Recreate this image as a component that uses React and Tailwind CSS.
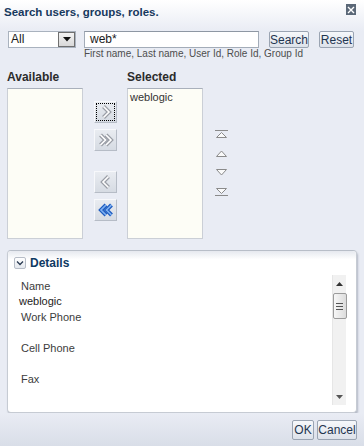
const font = { fontFamily: '"Liberation Sans", Arial, sans-serif' };

const Chevrons = ({ dir = "right", double = false, blue = false }) => {
  const outer = blue ? "#1f5cc0" : "#9a9ea6";
  const inner = blue ? "#7fb2f2" : "#ffffff";
  const r = dir === "right";
  const lines = double
    ? r
      ? ["2.5,3 7.5,8 2.5,13", "8,3 13,8 8,13"]
      : ["8,3 3,8 8,13", "13.5,3 8.5,8 13.5,13"]
    : r
    ? ["5.5,2.5 11,8 5.5,13.5"]
    : ["10.5,2.5 5,8 10.5,13.5"];
  return (
    <svg width="16" height="16" viewBox="0 0 16 16" className="block">
      {lines.map((p) => (
        <polyline key={p + "o"} points={p} fill="none" stroke={outer} strokeWidth="4" strokeLinejoin="miter" />
      ))}
      {lines.map((p) => (
        <polyline key={p + "i"} points={p} fill="none" stroke={inner} strokeWidth="1.6" strokeLinejoin="miter" />
      ))}
    </svg>
  );
};

const ShuttleBtn = ({ children, focus }) => (
  <div className="w-[23px] h-[22px] flex items-center justify-center bg-gradient-to-b from-[#e9ecf1] to-[#d6dbe3] border border-t-[#f7f8fb] border-l-[#f7f8fb] border-r-[#b6bcc6] border-b-[#b6bcc6]">
    <div className={focus ? "w-[19px] h-[18px] flex items-center justify-center border border-dotted border-black" : "flex items-center justify-center"}>
      {children}
    </div>
  </div>
);

const Reorder = ({ kind }) => {
  const up = kind === "top" || kind === "up";
  return (
    <svg width="13" height="9" viewBox="0 0 13 9" className="block">
      {kind === "top" && <line x1="0" y1="0.5" x2="13" y2="0.5" stroke="#8a8a8a" />}
      {kind === "bottom" && <line x1="0" y1="8.5" x2="13" y2="8.5" stroke="#8a8a8a" />}
      {up ? (
        <polygon points={kind === "top" ? "1.5,7.5 6.5,2.5 11.5,7.5" : "1.5,7.5 6.5,2 11.5,7.5"} fill="#fafafa" stroke="#8a8a8a" />
      ) : (
        <polygon points={kind === "bottom" ? "1.5,1.5 6.5,6.5 11.5,1.5" : "1.5,1.5 6.5,7 11.5,1.5"} fill="#fafafa" stroke="#8a8a8a" />
      )}
    </svg>
  );
};

const Btn = ({ children, w }) => (
  <button
    type="button"
    className={`${w} h-[17px] flex items-center justify-center text-[12px] leading-none text-[#1f3550] rounded-[2px] border border-[#9aa4b2] bg-gradient-to-b from-[#f6f8fb] to-[#dde2ea]`}
  >
    {children}
  </button>
);

const detailRows = [
  ["Name", "weblogic"],
  ["Work Phone", ""],
  ["Cell Phone", ""],
  ["Fax", ""],
  ["E-mail", ""],
];

export default function App() {
  return (
    <div className="w-[364px] h-[446px] overflow-hidden flex flex-col bg-[#e9ecf4] text-[11px] text-[#333]" style={font}>
      {/* Title bar */}
      <div className="h-[31px] flex items-start justify-between pl-[4px] pr-[8px] bg-gradient-to-b from-white to-[#e9ecf4]">
        <span className="pt-[5px] text-[11.5px] leading-[14px] font-bold text-[#17395e]">
          Search users, groups, roles.
        </span>
        <div className="mt-[4px] w-[10px] h-[11px] bg-[#5b6878] flex items-center justify-center">
          <svg width="8" height="8" viewBox="0 0 8 8">
            <path d="M1 1 L7 7 M7 1 L1 7" stroke="#ffffff" strokeWidth="1.4" />
          </svg>
        </div>
      </div>

      {/* Search row */}
      <div className="h-[17px] flex items-center">
        <div className="ml-[8px] w-[68px] h-[17px] flex bg-white border border-[#a9b2be]">
          <span className="flex-1 pl-[2px] text-[12px] leading-[15px] text-[#1a1a1a]">All</span>
          <div className="w-[17px] h-[15px] border border-[#6f6f6f] bg-gradient-to-b from-[#f3f3f3] to-[#d8d8d8] flex items-center justify-center">
            <svg width="8" height="5" viewBox="0 0 8 5">
              <polygon points="0,0 8,0 4,4.5" fill="#111" />
            </svg>
          </div>
        </div>
        <div className="ml-[8px] w-[175px] h-[17px] bg-white border border-[#a3acb8] border-t-[#8e97a3] pl-[5px] text-[12px] leading-[15px] text-[#1a1a1a]">
          web*
        </div>
        <div className="ml-[10px]">
          <Btn w="w-[40px]">Search</Btn>
        </div>
        <div className="ml-[10px]">
          <Btn w="w-[35px]">Reset</Btn>
        </div>
      </div>

      {/* Hint */}
      <div className="h-[12px] pl-[84px] text-[10px] leading-[12px] text-[#4d4d4d]">
        First name, Last name, User Id, Role Id, Group Id
      </div>

      {/* Labels */}
      <div className="mt-[10px] h-[14px] flex text-[12px] leading-[14px] font-bold text-[#2b2b2b]">
        <span className="pl-[7px] w-[127px]">Available</span>
        <span>Selected</span>
      </div>

      {/* Shuttle */}
      <div className="mt-[4px] flex items-start pl-[7px]">
        <div className="w-[76px] h-[151px] bg-[#fdfdf6] border border-[#cbcfd6] border-t-[#a9b0bb]" />
        <div className="ml-[11px] pt-[13px] flex flex-col">
          <ShuttleBtn focus>
            <Chevrons />
          </ShuttleBtn>
          <div className="mt-[6px]">
            <ShuttleBtn>
              <Chevrons double />
            </ShuttleBtn>
          </div>
          <div className="mt-[20px]">
            <ShuttleBtn>
              <Chevrons dir="left" />
            </ShuttleBtn>
          </div>
          <div className="mt-[6px]">
            <ShuttleBtn>
              <Chevrons dir="left" double blue />
            </ShuttleBtn>
          </div>
        </div>
        <div className="ml-[10px] w-[76px] h-[151px] bg-[#fdfdf6] border border-[#cbcfd6] border-t-[#a9b0bb] pl-[2px] pt-[1px] text-[11px] leading-[14px] text-[#333]">
          weblogic
        </div>
        <div className="ml-[12px] pt-[42px] flex flex-col gap-[10px]">
          <Reorder kind="top" />
          <Reorder kind="up" />
          <Reorder kind="down" />
          <Reorder kind="bottom" />
        </div>
      </div>

      {/* Details panel */}
      <div className="mt-[11px] mx-[7px] h-[163px] flex flex-col bg-white rounded-[4px] border border-[#c6cbd3] border-t-[#b8bec8] shadow-[1px_2px_2px_rgba(80,90,110,0.35)]">
        <div className="h-[24px] flex items-center pl-[6px] rounded-t-[4px] bg-gradient-to-b from-[#e6e9ef] to-white to-[35%]">
          <div className="w-[12px] h-[12px] rounded-[2px] border border-[#b7bdc7] bg-gradient-to-b from-white to-[#e4e8ee] flex items-center justify-center">
            <svg width="8" height="6" viewBox="0 0 8 6">
              <polyline points="1,1.5 4,4.5 7,1.5" fill="none" stroke="#2a3a52" strokeWidth="1.3" />
            </svg>
          </div>
          <span className="ml-[4px] text-[12px] font-bold leading-[14px] text-[#0f3a63]">Details</span>
        </div>
        <div className="h-[130px] flex overflow-hidden">
          <div className="flex-1 pt-[3px] pl-[11px] overflow-hidden">
            {detailRows.map(([label, value]) => (
              <div key={label}>
                <div className="h-[16px] pl-[2px] leading-[16px] text-[#3c3c3c]">{label}</div>
                <div className="h-[15px] leading-[15px] text-[#222]">{value}</div>
              </div>
            ))}
          </div>
          <div className="mr-[10px] w-[14px] h-[130px] flex flex-col items-center bg-[#f1f1f1] border-l border-[#e6e6e6]">
            <div className="h-[18px] flex items-center justify-center">
              <svg width="7" height="4" viewBox="0 0 7 4">
                <polygon points="0,4 7,4 3.5,0" fill="#333" />
              </svg>
            </div>
            <div className="w-[14px] h-[26px] rounded-[2px] border border-[#9b9b9b] bg-gradient-to-r from-[#f7f7f7] to-[#dcdcdc] flex flex-col items-center justify-center gap-[2px]">
              <div className="w-[7px] h-[1px] bg-[#555]" />
              <div className="w-[7px] h-[1px] bg-[#555]" />
              <div className="w-[7px] h-[1px] bg-[#555]" />
            </div>
            <div className="flex-1" />
            <div className="h-[16px] flex items-center justify-center">
              <svg width="7" height="4" viewBox="0 0 7 4">
                <polygon points="0,0 7,0 3.5,4" fill="#555" />
              </svg>
            </div>
          </div>
        </div>
      </div>

      {/* Footer */}
      <div className="flex-1 flex items-start justify-end gap-[3px] pt-[7px] pr-[7px] bg-gradient-to-b from-[#e9ecf4] to-[#d9dee8]">
        <Btn w="w-[22px] h-[20px]">OK</Btn>
        <Btn w="w-[40px] h-[20px]">Cancel</Btn>
      </div>
    </div>
  );
}
